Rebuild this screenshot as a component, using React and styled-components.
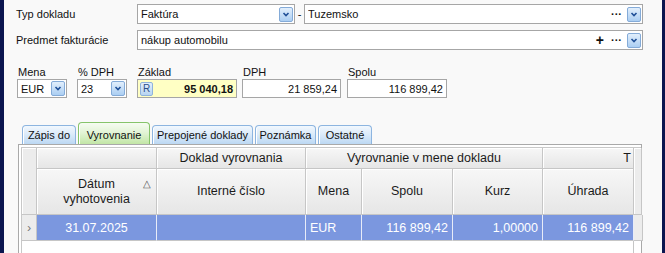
import React from "react";
import styled, { createGlobalStyle } from "styled-components";

const Global = createGlobalStyle`
  html, body { margin: 0; padding: 0; background: #f9f9f9; }
  body { font-family: "Liberation Sans", Arial, sans-serif; font-size: 11px; color: #111; }
  #root { width: 665px; height: 253px; overflow: hidden; }
`;

const Frame = styled.div`
  display: flex;
  width: 665px;
  height: 253px;
  overflow: hidden;
`;
const Edge = styled.div`
  width: ${(p) => p.$w}px;
  flex: none;
  background: #0b154f;
`;
const Content = styled.div`
  flex: 1;
  background: #f9f9f9;
  display: flex;
  flex-direction: column;
  min-width: 0;
`;

const FormRow = styled.div`
  display: flex;
  align-items: center;
  height: 20px;
  margin-top: ${(p) => p.$mt}px;
`;
const Label = styled.div`
  width: 121px;
  padding-left: 12px;
  flex: none;
  font-size: 11px;
`;
const Box = styled.div`
  display: flex;
  align-items: center;
  height: ${(p) => p.$h || 20}px;
  width: ${(p) => p.$w}px;
  box-sizing: border-box;
  border: 1px solid #a6a6a6;
  background: ${(p) => p.$bg || "#fff"};
  padding: 0 1px 0 3px;
  flex: none;
  font-size: 11px;
`;
const BoxText = styled.span`
  flex: 1;
  white-space: nowrap;
  overflow: hidden;
  text-align: ${(p) => p.$align || "left"};
  font-weight: ${(p) => (p.$bold ? 700 : 400)};
  padding-right: ${(p) => p.$pr || 0}px;
`;
const Dash = styled.span`
  width: 9px;
  text-align: center;
  flex: none;
`;
const Dots = styled.span`
  font-weight: 700;
  margin-right: 5px;
  font-size: 11px;
  line-height: 10px;
`;
const Plus = styled.span`
  font-weight: 700;
  font-size: 14px;
  margin-right: 7px;
  line-height: 10px;
`;

const DropBtn = () => (
  <svg width="14" height="15" viewBox="0 0 14 15" style={{ flex: "none" }}>
    <defs>
      <linearGradient id="db" x1="0" y1="0" x2="0" y2="1">
        <stop offset="0" stopColor="#e4f0fc" />
        <stop offset="1" stopColor="#a9cdf2" />
      </linearGradient>
    </defs>
    <rect x="0.5" y="0.5" width="13" height="14" rx="1.5" fill="url(#db)" stroke="#84abd8" />
    <path d="M4.5 6 L7 8.5 L9.5 6" fill="none" stroke="#1f4f97" strokeWidth="1.6" />
  </svg>
);

const FieldsRow = styled.div`
  display: flex;
  margin-top: 16px;
  padding-left: 13px;
`;
const Field = styled.div`
  display: flex;
  flex-direction: column;
  margin-left: ${(p) => p.$ml || 0}px;
`;
const FieldLabel = styled.div`
  font-size: 11px;
  height: 13px;
  padding-left: 1px;
`;
const RBtn = styled.span`
  width: 13px;
  height: 14px;
  box-sizing: border-box;
  border: 1px solid #8fb3dc;
  border-radius: 2px;
  background: linear-gradient(#e2eefb, #b8d5f2);
  color: #2a4f88;
  font-size: 10px;
  display: flex;
  align-items: center;
  justify-content: center;
  flex: none;
  margin-left: -1px;
`;

const Tabs = styled.div`
  display: flex;
  align-items: flex-end;
  gap: 2px;
  margin-top: 24px;
  padding-left: 18px;
  height: 22px;
`;
const Tab = styled.div`
  box-sizing: border-box;
  height: ${(p) => (p.$active ? 22 : 19)}px;
  padding: ${(p) => (p.$active ? "2px 0 0" : "0")};
  width: ${(p) => p.$w}px;
  display: flex;
  align-items: center;
  justify-content: center;
  font-size: 11px;
  border: 1px solid ${(p) => (p.$active ? "#86c46a" : "#8db5e0")};
  border-bottom: none;
  border-radius: 4px 4px 0 0;
  background: ${(p) =>
    p.$active
      ? "linear-gradient(#f6fcf2 0%, #e3f4d6 45%, #c2e6a6 100%)"
      : "linear-gradient(#f2f8fe 0%, #dcebfa 45%, #bcd8f3 100%)"};
  box-shadow: inset 1px 0 0 #fff;
`;

const GridOuter = styled.div`
  margin-left: 14px;
  width: 624px;
  flex: 1;
  box-sizing: border-box;
  border: 1px solid #a9a9a9;
  border-bottom: none;
  background: #fff;
  padding: 2px 0 0 2px;
`;
const Grid = styled.div`
  display: grid;
  grid-template-columns: 15px 120px 149px 56px 91px 90px 91px 8px;
  grid-template-rows: 21px 46px 26px 30px;
  border-left: 1px solid #c8c8c8;
  border-top: 1px solid #c8c8c8;
  font-size: 12.5px;
`;
const HCell = styled.div`
  grid-column: ${(p) => p.$col};
  grid-row: ${(p) => p.$row};
  box-sizing: border-box;
  background: ${(p) => (p.$plain ? "#ececec" : "linear-gradient(#f7f7f7, #e6e6e6)")};
  border-right: 1px solid #c6c6c6;
  border-bottom: 1px solid #c6c6c6;
  box-shadow: inset 1px 1px 0 #fff;
  display: flex;
  align-items: center;
  justify-content: ${(p) => p.$justify || "center"};
  text-align: center;
  color: #1b1b1b;
  overflow: hidden;
  white-space: nowrap;
  position: relative;
  padding: 0 ${(p) => p.$pr || 0}px 0 0;
  line-height: 15px;
`;
const SortMark = styled.span`
  position: absolute;
  right: 5px;
  top: 7px;
  font-size: 10px;
  color: #555;
`;
const DCell = styled.div`
  grid-column: ${(p) => p.$col};
  grid-row: 3;
  box-sizing: border-box;
  background: ${(p) => (p.$ind ? "#ececec" : "#7b97df")};
  border-right: 1px solid ${(p) => (p.$ind ? "#c6c6c6" : "#e8ecf8")};
  border-bottom: 1px solid #c6c6c6;
  color: ${(p) => (p.$ind ? "#777" : "#fff")};
  display: flex;
  align-items: center;
  justify-content: ${(p) => p.$justify || "flex-end"};
  padding: 0 4px;
  white-space: nowrap;
  overflow: hidden;
`;
const Empty = styled.div`
  grid-column: ${(p) => p.$col};
  grid-row: 4;
  border-right: 1px solid #c6c6c6;
`;

export default function App() {
  return (
    <>
      <Global />
      <Frame>
        <Edge $w={4} />
        <Content>
          <FormRow $mt={4}>
            <Label>Typ dokladu</Label>
            <Box $w={158}>
              <BoxText>Faktúra</BoxText>
              <DropBtn />
            </Box>
            <Dash>-</Dash>
            <Box $w={339}>
              <BoxText>Tuzemsko</BoxText>
              <Dots>···</Dots>
              <DropBtn />
            </Box>
          </FormRow>
          <FormRow $mt={6}>
            <Label>Predmet fakturácie</Label>
            <Box $w={506}>
              <BoxText>nákup automobilu</BoxText>
              <Plus>+</Plus>
              <Dots>···</Dots>
              <DropBtn />
            </Box>
          </FormRow>
          <FieldsRow>
            <Field>
              <FieldLabel>Mena</FieldLabel>
              <Box $w={50} $h={19}>
                <BoxText>EUR</BoxText>
                <DropBtn />
              </Box>
            </Field>
            <Field $ml={10}>
              <FieldLabel>% DPH</FieldLabel>
              <Box $w={50} $h={19}>
                <BoxText>23</BoxText>
                <DropBtn />
              </Box>
            </Field>
            <Field $ml={10}>
              <FieldLabel>Základ</FieldLabel>
              <Box $w={100} $h={19} $bg="#ffffc4">
                <RBtn>R</RBtn>
                <BoxText $align="right" $bold $pr={2}>95 040,18</BoxText>
              </Box>
            </Field>
            <Field $ml={5}>
              <FieldLabel>DPH</FieldLabel>
              <Box $w={99} $h={19}>
                <BoxText $align="right" $pr={2}>21 859,24</BoxText>
              </Box>
            </Field>
            <Field $ml={6}>
              <FieldLabel>Spolu</FieldLabel>
              <Box $w={100} $h={19}>
                <BoxText $align="right" $pr={2}>116 899,42</BoxText>
              </Box>
            </Field>
          </FieldsRow>
          <Tabs>
            <Tab $w={54}>Zápis do</Tab>
            <Tab $w={72} $active>Vyrovnanie</Tab>
            <Tab $w={101}>Prepojené doklady</Tab>
            <Tab $w={61}>Poznámka</Tab>
            <Tab $w={54}>Ostatné</Tab>
          </Tabs>
          <GridOuter>
            <Grid>
              <HCell $col="1" $row="1 / 3" $plain />
              <HCell $col="2" $row="1" />
              <HCell $col="3" $row="1">Doklad vyrovnania</HCell>
              <HCell $col="4 / 7" $row="1">Vyrovnanie v mene dokladu</HCell>
              <HCell $col="7" $row="1" $justify="flex-end" $pr={2}>T</HCell>
              <HCell $col="8" $row="1 / 3" $plain />
              <HCell $col="2" $row="2">
                Dátum
                <br />
                vyhotovenia
                <SortMark>△</SortMark>
              </HCell>
              <HCell $col="3" $row="2">Interné číslo</HCell>
              <HCell $col="4" $row="2">Mena</HCell>
              <HCell $col="5" $row="2">Spolu</HCell>
              <HCell $col="6" $row="2">Kurz</HCell>
              <HCell $col="7" $row="2">Úhrada</HCell>
              <DCell $col="1" $ind $justify="center">›</DCell>
              <DCell $col="2" $justify="center">31.07.2025</DCell>
              <DCell $col="3" />
              <DCell $col="4" $justify="flex-start">EUR</DCell>
              <DCell $col="5">116 899,42</DCell>
              <DCell $col="6">1,00000</DCell>
              <DCell $col="7">116 899,42</DCell>
              <DCell $col="8" $ind />
              <Empty $col="7" />
            </Grid>
          </GridOuter>
        </Content>
        <Edge $w={3} />
      </Frame>
    </>
  );
}
